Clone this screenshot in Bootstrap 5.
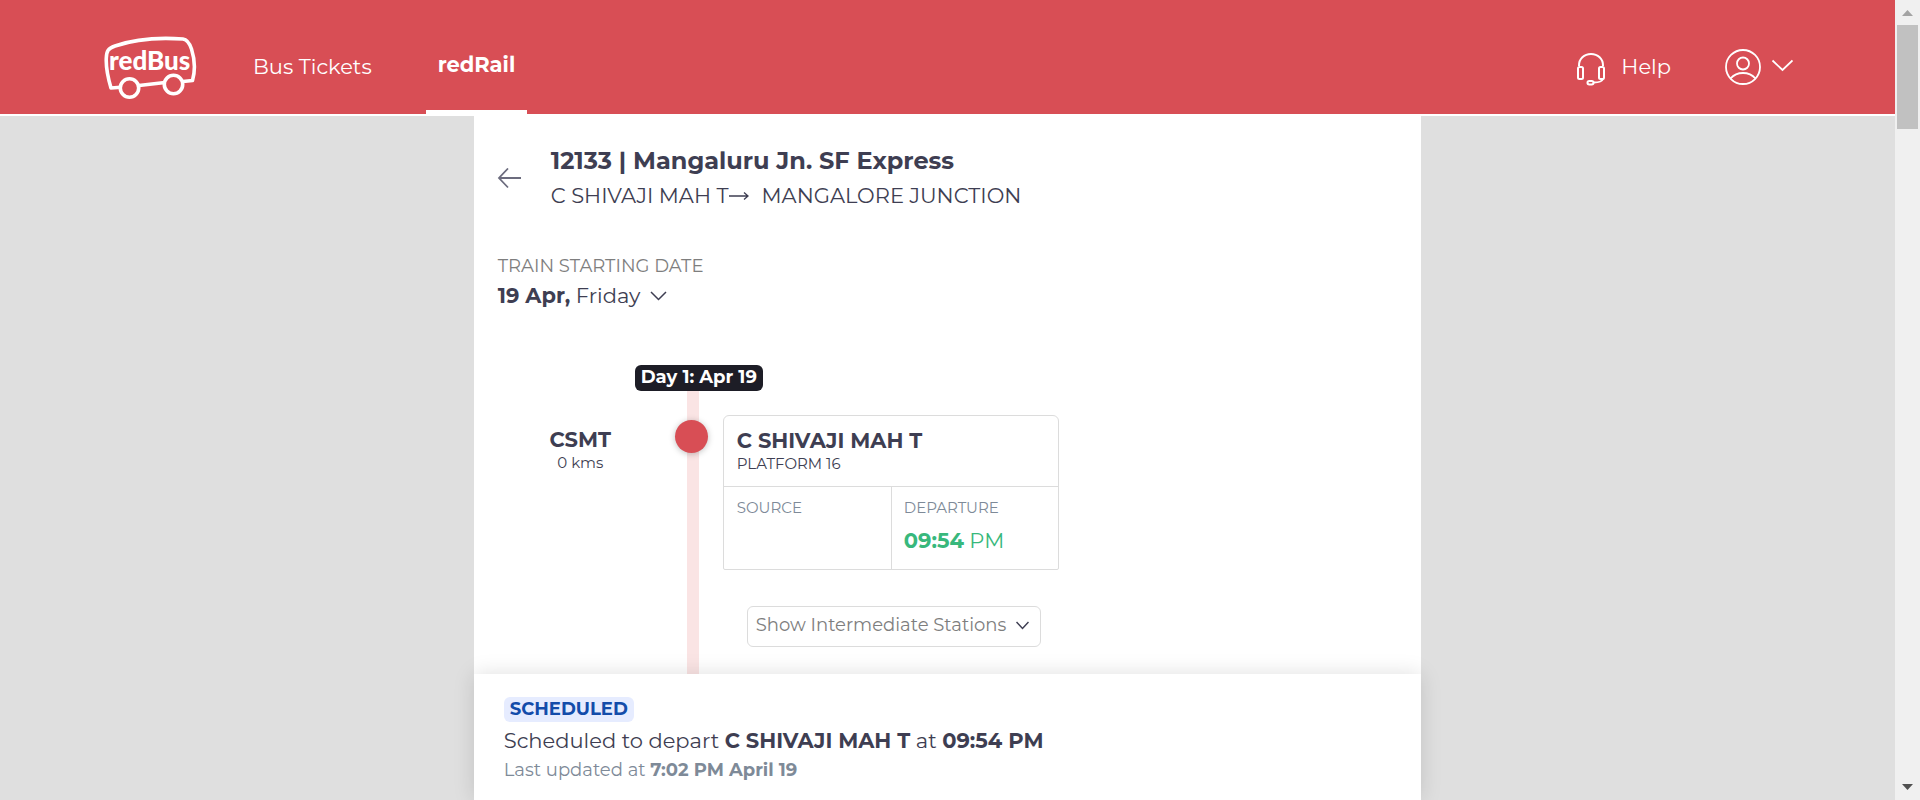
<!DOCTYPE html>
<html lang="en">
<head>
<meta charset="utf-8">
<meta name="viewport" content="width=device-width, initial-scale=1">
<title>12133 | Mangaluru Jn. SF Express</title>
<link href="https://cdn.jsdelivr.net/npm/bootstrap@5.3.0/dist/css/bootstrap.min.css" rel="stylesheet">
<style>
  :root { --brand: #d84e55; --ink: #3e3e52; --line: #dcdcdc; --slate: #7e8a98; }
  body { font-family: Montserrat, Inter, sans-serif; color: var(--ink); background: #dfdfdf; font-weight: 400; }
  b { font-weight: 700; }
  .t24 { font-size: 24px; line-height: 36px; }
  .t21 { font-size: 21px; line-height: 34px; }
  .t18 { font-size: 18px; line-height: 24px; }
  .t15 { font-size: 15px; line-height: 20px; }
  .muted-text { color: #7e7e7e; }
  .slate-text { color: var(--slate); }

  .top-bar { background: var(--brand); height: 116px; border-bottom: 2px solid #fff; padding: 0 102px 0 104px; }
  .top-bar a { color: #fff; text-decoration: none; font-size: 21px; line-height: 30px; font-weight: 400; }
  .top-bar svg { display: block; }
  .logo { padding-top: 36px; }
  .top-bar nav { gap: 42px; margin-left: 43px; }
  .top-bar .tab { height: 114px; padding: 52px 12px 0; }
  .top-bar .tab.active { font-weight: 700; border-bottom: 4px solid #fff; padding-top: 50px; }
  .top-bar a.help { padding-top: 52px; gap: 15px; }
  .account { margin: 49px 0 0 54px; }
  .plain-btn { background: none; border: 0; padding: 0; color: inherit; }

  .sheet { width: 50%; background: #fff; }
  .train-head { padding: 27px 24px 0 23px; }
  .train-head .plain-btn { width: 54px; }
  .route-arrow { margin-right: 13px; }
  .start-date { padding: 41px 24px 0; }
  .start-date .plain-btn { padding-top: 1px; gap: 10px; }

  .timeline { margin-top: 52px; }
  .station-code { width: 213px; padding-top: 61px; }
  .track { width: 12px; background: #fae4e4; }
  .day-pill { left: -52px; top: 0; background: #1d1d26; color: #fff; border-radius: 6px; padding: 0 6px 2px; white-space: nowrap; }
  .stop-dot { width: 33px; height: 33px; top: 55px; left: -12px; background: var(--brand); box-shadow: 0 1px 6px rgba(0,0,0,.25); }
  .stop-card { width: 336px; margin-top: 50px; border: 1px solid var(--line); border-radius: 6px 6px 2px 2px; }
  .stop-card .stop-head { padding: 11px 13px 12px; border-bottom: 1px solid var(--line); }
  .stop-card .cell { padding: 11px 13px 13px; }
  .stop-card .cell + .cell { border-left: 1px solid var(--line); padding-left: 12px; }
  .stop-name { line-height: 27px; }
  .stop-time { color: #38b87c; line-height: 30px; margin-top: 8px; }
  .show-btn { width: 294px; margin: 36px 0 26px 24px; background: #fff; border: 1px solid var(--line); border-radius: 6px; padding: 6px 11px 9px 8px; white-space: nowrap; }

  .status-bar { width: 50%; background: #fff; padding: 23px 30px 18px; box-shadow: 0 0 20px rgba(0,0,0,.13); }
  .status-tag { background: #e6ecff; color: #134caa; border-radius: 6px; padding: 0 6px 1px; }
  .status-line { margin-top: 2px; }

  .scroll-rail { width: 25px; background: #f0f0f0; padding: 10px 2px; }
  .scroll-thumb { height: 104px; background: #c1c1c1; margin-top: 9px; }
</style>
</head>
<body class="d-flex vh-100 overflow-hidden">
<div class="d-flex flex-column flex-grow-1">
  <header class="top-bar d-flex flex-shrink-0">
    <a href="#" class="logo d-block" aria-label="redBus home">
      <svg width="94" height="64" viewBox="0 0 94 64" fill="none" stroke="#fff" stroke-width="3.6" stroke-linejoin="round">
        <path d="M17 51.200L7 52C4 42 1.800 32 2.300 22C2.600 15 4 12.500 11 10C34 2 58 1.500 79 3C83 3.500 85.500 7 87.500 13C91 24 91.500 34 88.500 44.500L79 45.500M35 49.500L61 46.500"/>
        <circle cx="25.500" cy="52" r="9.200"/><circle cx="69.500" cy="48.500" r="9.200"/>
        <text x="5" y="34" fill="#fff" stroke="none" font-family="Lato, 'Open Sans', sans-serif" font-weight="900" font-size="26">redBus</text>
      </svg>
    </a>
    <nav class="d-flex">
      <a class="tab" href="#">Bus Tickets</a>
      <a class="tab active" href="#">redRail</a>
    </nav>
    <div class="d-flex align-items-start ms-auto">
      <a class="help d-flex" href="#">
        <svg width="30" height="34" viewBox="0 1 30 34" fill="none" stroke="#fff" stroke-width="2">
          <path d="M3 15V14.500C3 8 8 3 15 3s12 5 12 11.500V15M27 28c-1 2.500-4 3.500-9 3.500"/>
          <rect x="2" y="16" width="5" height="12" rx="1.500"/><rect x="23" y="16" width="5" height="12" rx="1.500"/>
          <rect x="11.500" y="30" width="6" height="3.500" rx="1.700"/>
        </svg>Help</a>
      <button class="plain-btn account" type="button" aria-label="Account">
        <svg width="68" height="36" viewBox="0 0 68 36" fill="none" stroke="#fff" stroke-width="1.800">
          <circle cx="18" cy="18" r="17"/><circle cx="18" cy="14.500" r="6"/><path d="M5.500 29.500C9 25.500 13 24 18 24s9 1.500 12.500 5.500M47.500 11.500l10 9.500 10-9.500"/>
        </svg>
      </button>
    </div>
  </header>

  <main class="sheet mx-auto d-flex flex-column flex-grow-1 overflow-hidden">
    <div class="train-head d-flex align-items-center">
      <button class="plain-btn text-start" type="button" aria-label="Back">
        <svg width="24" height="22" viewBox="0 0 24 22" fill="none" stroke="#6c6c7e" stroke-width="1.800"><path d="M24 10H2M11 .5L2 10l9 9.500"/></svg>
      </button>
      <div>
        <h1 class="t24 fw-bold m-0">12133 | Mangaluru Jn. SF Express</h1>
        <div class="t21 d-flex align-items-center">C SHIVAJI MAH T<svg class="route-arrow" width="20" height="10" viewBox="0 0 20 10" fill="none" stroke="#3e3e52" stroke-width="1.300"><path d="M0 5h19M15 1.500L19 5l-4 3.500"/></svg>MANGALORE JUNCTION</div>
      </div>
    </div>

    <div class="start-date">
      <div class="t18 muted-text" id="dateLabel">TRAIN STARTING DATE</div>
      <button class="plain-btn t21 d-flex align-items-center" type="button" aria-describedby="dateLabel">
        <span><b>19 Apr,</b> Friday</span>
        <svg width="17" height="10" viewBox="0 0 17 10" fill="none" stroke="#3e3e52" stroke-width="1.500"><path d="M1 1l7.500 7.500L16 1"/></svg>
      </button>
    </div>

    <section class="timeline d-flex flex-grow-1">
      <div class="station-code text-center">
        <div class="t21 stop-name fw-bold">CSMT</div>
        <div class="t15">0 kms</div>
      </div>
      <div class="track position-relative">
        <span class="day-pill t18 fw-bold position-absolute">Day 1: Apr 19</span>
        <span class="stop-dot position-absolute rounded-circle"></span>
      </div>
      <div class="ms-4">
        <article class="stop-card">
          <div class="stop-head">
            <h2 class="t21 stop-name fw-bold m-0">C SHIVAJI MAH T</h2>
            <div class="t15">PLATFORM 16</div>
          </div>
          <div class="row g-0">
            <div class="col-6 cell t15 slate-text">SOURCE</div>
            <div class="col-6 cell">
              <div class="t15 slate-text">DEPARTURE</div>
              <div class="t21 stop-time"><b>09:54</b> PM</div>
            </div>
          </div>
        </article>
        <button class="show-btn t18 muted-text d-flex justify-content-between align-items-center" type="button">Show Intermediate Stations
          <svg width="13" height="9" viewBox="0 0 13 9" fill="none" stroke="#3e3e52" stroke-width="1.500"><path d="M.5 1l6 6.500 6-6.500"/></svg>
        </button>
      </div>
    </section>
  </main>

  <footer class="status-bar mx-auto flex-shrink-0 position-relative">
    <span class="status-tag t18 fw-bold d-inline-block align-top">SCHEDULED</span>
    <div class="t21 status-line">Scheduled to depart <b>C SHIVAJI MAH T</b> at <b>09:54 PM</b></div>
    <div class="t18 slate-text">Last updated at <b>7:02 PM April 19</b></div>
  </footer>
</div>

<div class="scroll-rail d-flex flex-column flex-shrink-0" aria-hidden="true">
  <svg class="mx-auto d-block" width="11" height="6" viewBox="0 0 11 6"><path d="M5.500 0L11 6H0z" fill="#a3a3a3"/></svg>
  <div class="scroll-thumb"></div>
  <svg class="mx-auto d-block mt-auto" width="11" height="6" viewBox="0 0 11 6"><path d="M0 0h11L5.500 6z" fill="#505050"/></svg>
</div>
<script src="https://cdn.jsdelivr.net/npm/bootstrap@5.3.0/dist/js/bootstrap.bundle.min.js"></script>
</body>
</html>
